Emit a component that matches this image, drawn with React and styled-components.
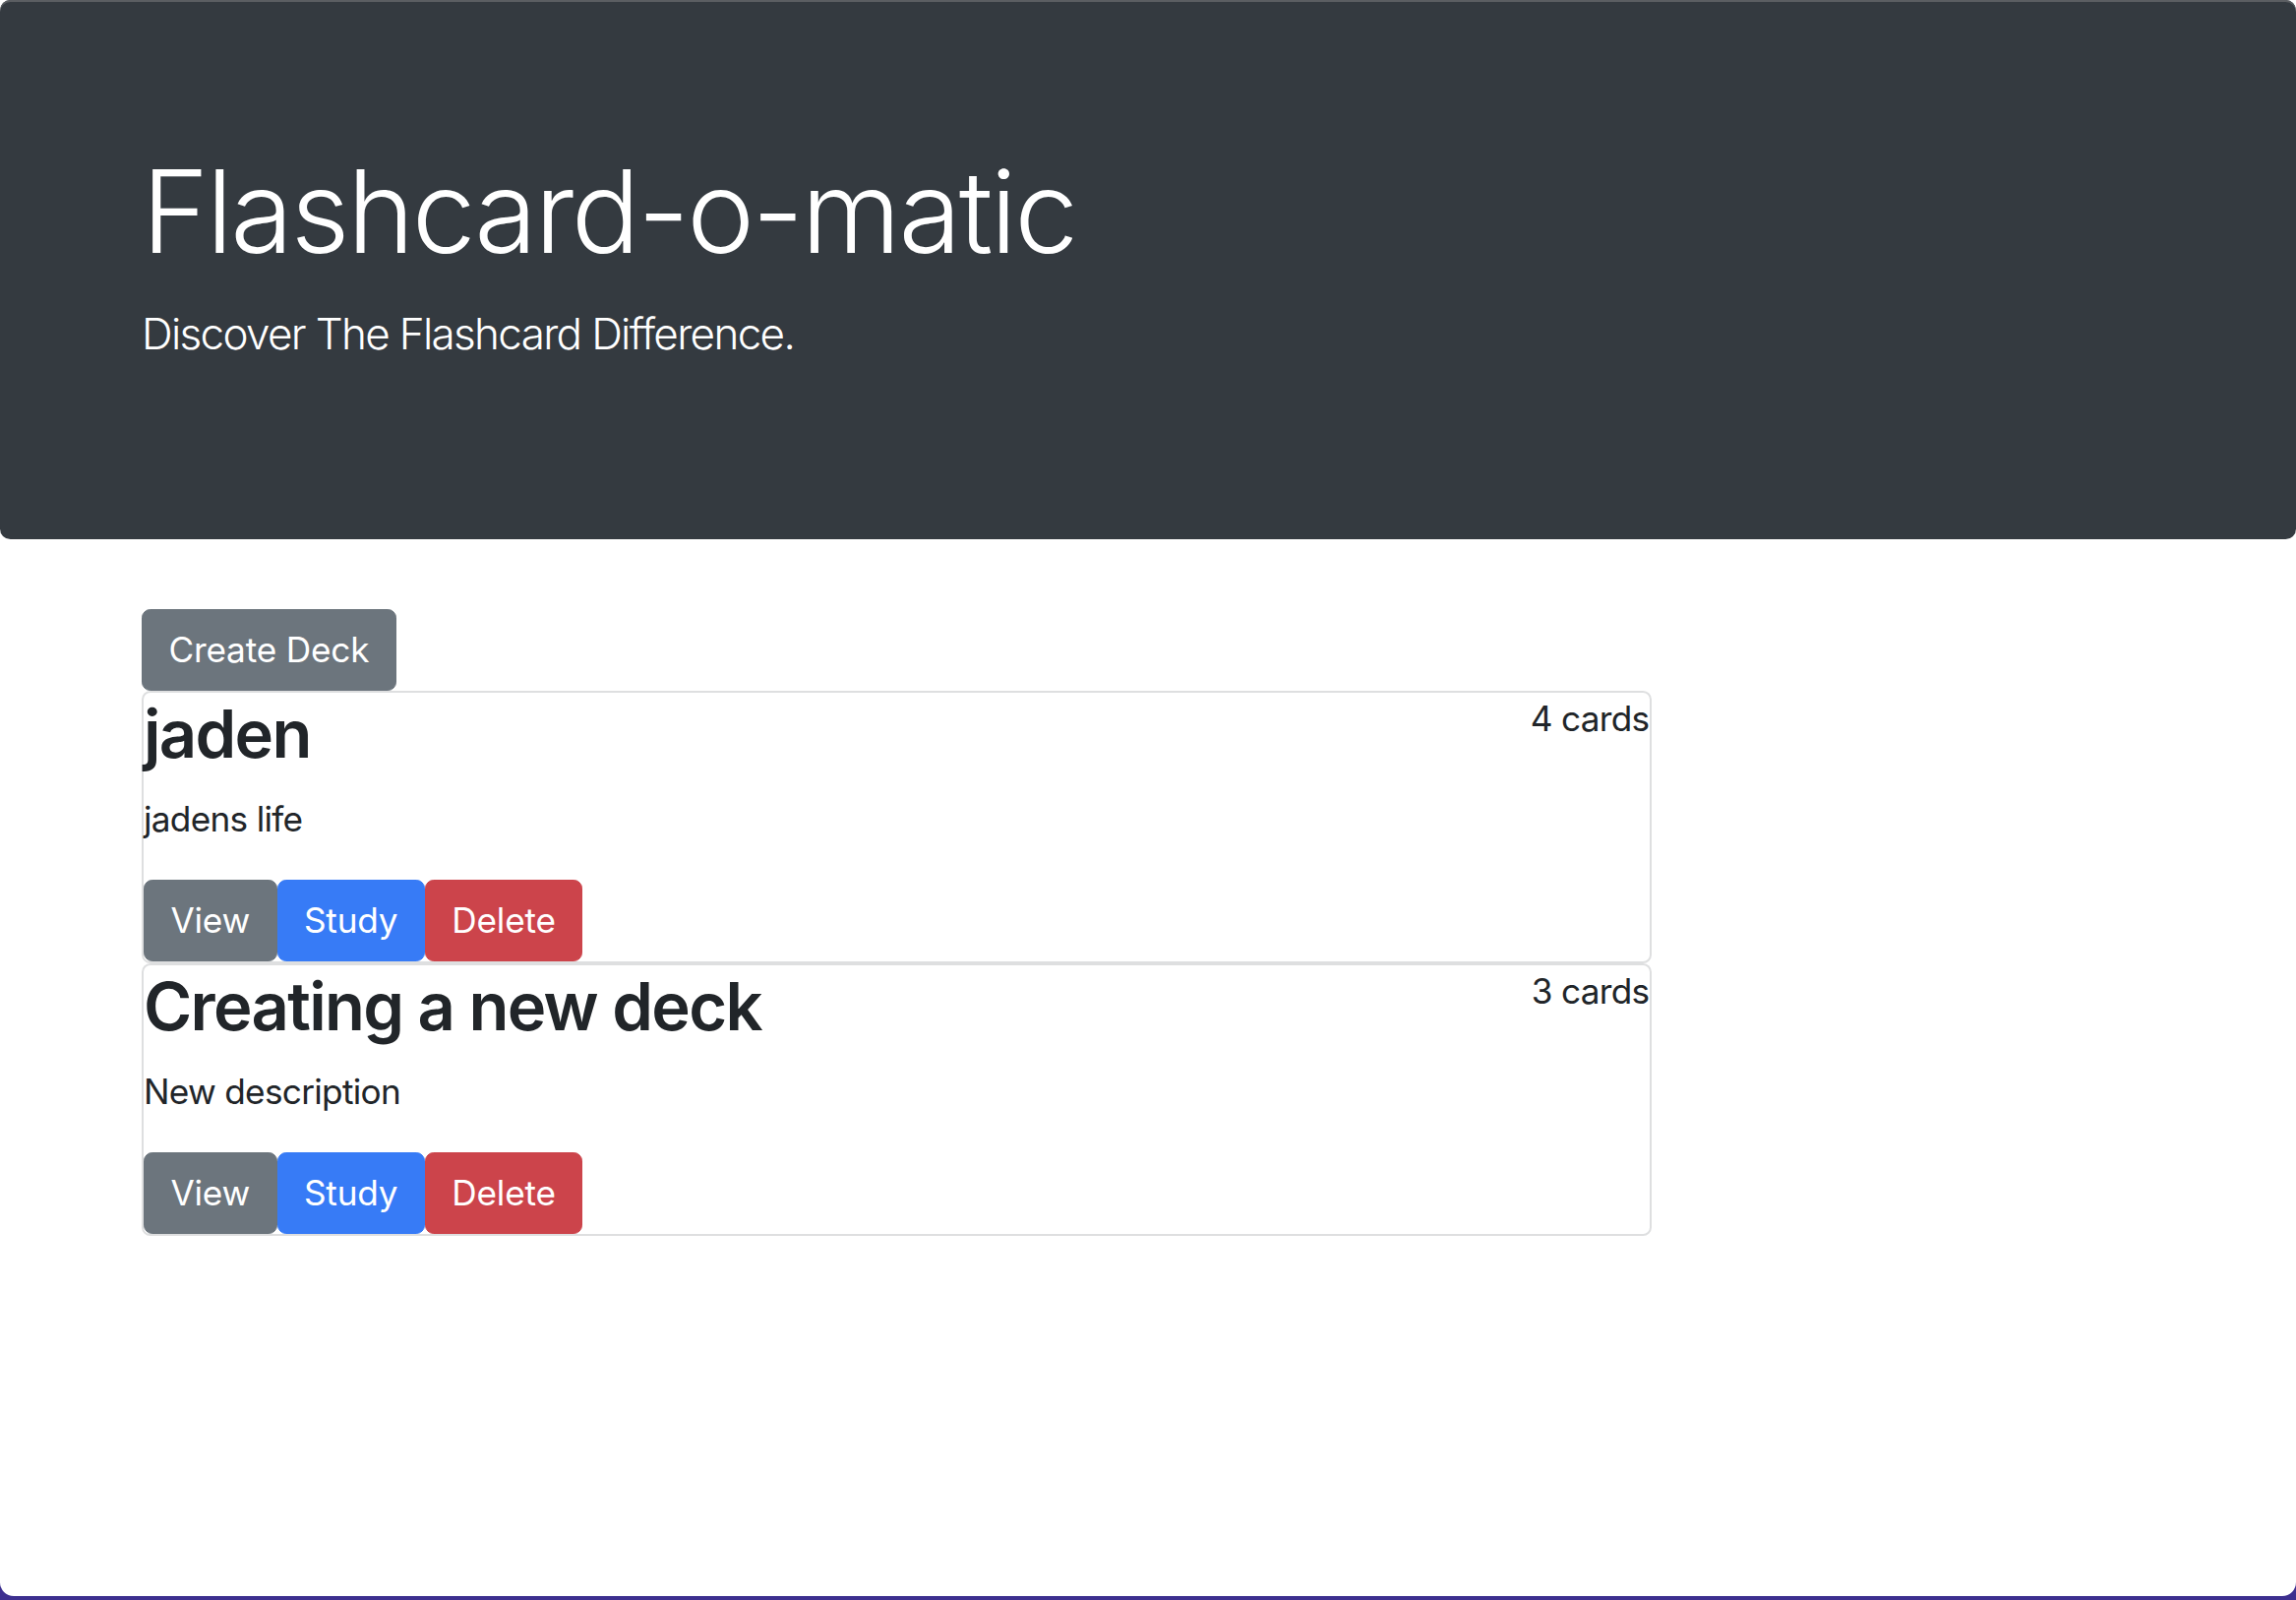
import styled, { createGlobalStyle } from "styled-components";

const GlobalStyle = createGlobalStyle`
  html {
    font-size: 35.2px;
  }
  body {
    margin: 0;
    background: #3d2f8f;
    font-family: Inter, "Noto Sans", "Liberation Sans", sans-serif;
    color: #212529;
    line-height: 1.5;
    letter-spacing: -0.02em;
  }
  * {
    box-sizing: border-box;
  }
`;

const Page = styled.div`
  background: #fff;
  min-height: calc(100vh - 4px);
  border-bottom-left-radius: 14px;
  border-bottom-right-radius: 14px;
  overflow: hidden;
`;

const Jumbotron = styled.header`
  background: #343a40;
  color: #fff;
  padding: 4rem 0;
  margin-bottom: 2rem;
  border-radius: 0.3rem;
  box-shadow: inset 0 2px 0 #5b5e62;
`;

const Container = styled.div`
  max-width: 60rem;
  margin: 0 auto;
  padding: 0 0.9375rem;
`;

const Title = styled.h1`
  font-size: 3.3rem;
  font-weight: 300;
  line-height: 4.2rem;
  letter-spacing: -0.022em;
  margin: 0 0 0.5rem;
`;

const Lead = styled.p`
  font-size: 1.25rem;
  font-weight: 300;
  letter-spacing: -0.038em;
  margin: 0 0 1rem;
`;

const DeckList = styled.div`
  width: 75%;
`;

const Button = styled.button`
  display: inline-block;
  font-family: inherit;
  font-size: 1rem;
  font-weight: 400;
  line-height: 1.5;
  letter-spacing: -0.005em;
  padding: 0.4rem 0.75rem;
  border: 1px solid ${(p) => p.$bg};
  border-radius: 0.25rem;
  background: ${(p) => p.$bg};
  color: #fff;
  cursor: pointer;
`;

const Card = styled.div`
  border: 2px solid #dedfe0;
  border-radius: 0.25rem;
  background: #fff;
`;

const CardTop = styled.div`
  display: flex;
  justify-content: space-between;
`;

const DeckName = styled.h2`
  font-size: 1.9rem;
  font-weight: 600;
  line-height: 2.4rem;
  letter-spacing: -0.025em;
  margin: 0 0 0.5rem;
`;

const Count = styled.span`
  font-size: 1rem;
`;

const Description = styled.p`
  margin: 0 0 1rem;
`;

const Actions = styled.div`
  display: flex;
`;

const decks = [
  { id: 1, name: "jaden", description: "jadens life", cards: 4 },
  { id: 2, name: "Creating a new deck", description: "New description", cards: 3 },
];

const App = () => {
  return (
    <Page>
      <GlobalStyle />
      <Jumbotron>
        <Container>
          <Title>Flashcard-o-matic</Title>
          <Lead>Discover The Flashcard Difference.</Lead>
        </Container>
      </Jumbotron>
      <Container>
        <Button $bg="#6c757d">Create Deck</Button>
        <DeckList>
          {decks.map((deck) => (
            <Card key={deck.id}>
              <CardTop>
                <DeckName>{deck.name}</DeckName>
                <Count>{deck.cards} cards</Count>
              </CardTop>
              <Description>{deck.description}</Description>
              <Actions>
                <Button $bg="#6c757d">View</Button>
                <Button $bg="#377bf6">Study</Button>
                <Button $bg="#cc444b">Delete</Button>
              </Actions>
            </Card>
          ))}
        </DeckList>
      </Container>
    </Page>
  );
};

export default App;
